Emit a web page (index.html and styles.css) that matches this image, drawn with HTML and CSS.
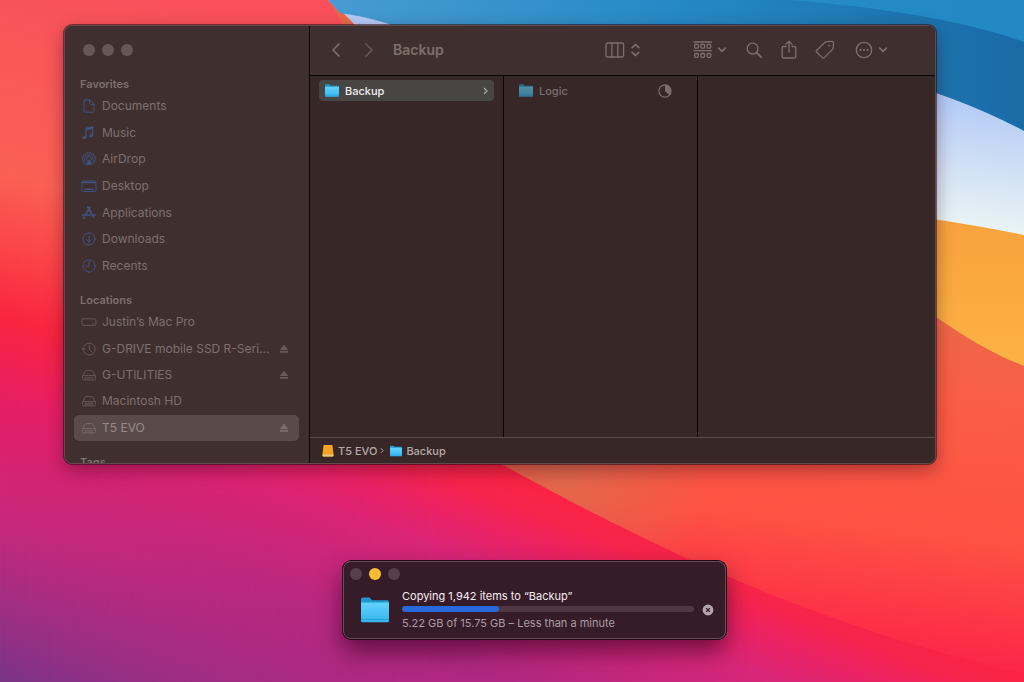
FILE: index.html
```html
<!DOCTYPE html>
<html lang="en">
<head>
<meta charset="utf-8">
<title>Backup</title>
<link rel="stylesheet" href="styles.css">
</head>
<body>
<svg class="defs" aria-hidden="true">
  <defs>
    <linearGradient id="folderFill" x1="0" y1="0" x2="0" y2="1"><stop offset="0" stop-color="#62d3fb"/><stop offset="1" stop-color="#35b4ee"/></linearGradient>
    <symbol id="folder" viewBox="0 0 28 26"><path d="M0 2.2Q0 .5 1.7.5H8.5L11 3.3H26.5Q28 3.3 28 5V10H0Z" fill="#1f98cd"/><path d="M0 5.5H28V23.8Q28 25.3 26.5 25.3H1.5Q0 25.3 0 23.8Z" fill="url(#folderFill)"/><path d="M0 22.4H28" stroke="#249fd6" stroke-width="1"/></symbol>
    <symbol id="eject" viewBox="0 0 10 10"><path d="M5 .8L9.2 5.9H.8ZM.8 7H9.2V8.8H.8Z" fill="currentColor"/></symbol>
    <symbol id="drive" viewBox="0 0 16 16"><path d="M1.5 9.3L4 4.4Q4.4 3.6 5.3 3.6H10.7Q11.6 3.6 12 4.4L14.5 9.3V11.5Q14.5 12.9 13.1 12.9H2.9Q1.5 12.9 1.5 11.5ZM1.6 9.2Q2 8.6 2.9 8.6H13.1Q14 8.6 14.4 9.2M4 10.9H12"/></symbol>
    <symbol id="chev" viewBox="0 0 8 6"><path d="M.8 1.2L4 4.5L7.2 1.2"/></symbol>
  </defs>
</svg>
<svg class="wallpaper" viewBox="0 0 1024 682" preserveAspectRatio="none" aria-hidden="true">
  <defs>
    <linearGradient id="base" gradientUnits="userSpaceOnUse" x1="180" y1="0" x2="10" y2="682"><stop offset="0" stop-color="#f9505c"/><stop offset=".3" stop-color="#fa6054"/><stop offset=".4" stop-color="#fb4548"/><stop offset=".5" stop-color="#f92440"/><stop offset=".62" stop-color="#e61e66"/><stop offset=".78" stop-color="#c9287c"/><stop offset="1" stop-color="#7b3488"/></linearGradient>
    <linearGradient id="lower" gradientUnits="userSpaceOnUse" x1="510" y1="472" x2="439" y2="654"><stop offset="0" stop-color="#fb2342"/><stop offset=".15" stop-color="#f6244c"/><stop offset=".32" stop-color="#ea2264"/><stop offset=".52" stop-color="#d8267a"/><stop offset="1" stop-color="#b02882"/></linearGradient>
    <linearGradient id="fade" x1="0" x2="1"><stop offset="0" stop-color="#fff" stop-opacity="0"/><stop offset=".45" stop-color="#fff"/></linearGradient>
    <mask id="lowerMask"><rect y="400" width="1024" height="282" fill="url(#fade)"/></mask>
    <linearGradient id="coral" gradientUnits="userSpaceOnUse" x1="955" y1="300" x2="915" y2="662"><stop offset="0" stop-color="#ea6848"/><stop offset=".3" stop-color="#fb5c45"/><stop offset=".65" stop-color="#fe5143"/><stop offset="1" stop-color="#fc2549"/></linearGradient>
    <radialGradient id="warm" gradientUnits="userSpaceOnUse" cx="560" cy="470" r="150"><stop offset="0" stop-color="#e0694c"/><stop offset="1" stop-color="#e0694c" stop-opacity="0"/></radialGradient>
    <linearGradient id="blue" x1="0" x2="1"><stop offset="0" stop-color="#489bd2"/><stop offset=".5" stop-color="#2589c5"/><stop offset="1" stop-color="#196ba6"/></linearGradient>
    <linearGradient id="white" gradientUnits="userSpaceOnUse" x1="960" y1="100" x2="945" y2="230"><stop offset="0" stop-color="#b4cbf7"/><stop offset=".4" stop-color="#cbdcf5"/><stop offset="1" stop-color="#ecf6f5"/></linearGradient>
    <linearGradient id="amber" x1="0" y1="0" x2="0" y2="1"><stop offset="0" stop-color="#f79e3c"/><stop offset="1" stop-color="#fdb244"/></linearGradient>
  </defs>
  <rect width="1024" height="682" fill="url(#base)"/>
  <path d="M328 0C380 60 400 400 500 464V682H1024V0Z" fill="url(#coral)"/>
  <rect x="500" y="400" width="300" height="260" fill="url(#warm)"/>
  <g mask="url(#lowerMask)"><path d="M0 400H430C480 440 485 455 505 466C570 502 630 532 690 560C780 600 880 640 1024 674V682H0Z" fill="url(#lower)"/></g>
  <path d="M880 282C945 320 970 345 1024 366V215L880 190Z" fill="url(#amber)"/>
  <path d="M328 0C350 18 357 25 380 60L880 212Q950 220 1024 235V0Z" fill="url(#white)"/>
  <path d="M328 0L340 13Q375 18 400 28L880 76Q960 97 1024 131V0Z" fill="url(#blue)"/>
  <path d="M790 0Q940 12 1024 42V0Z" fill="#2792cd" opacity=".75"/>
</svg>

<main class="desktop">
<section class="window finder" aria-label="Finder">
  <aside class="sidebar">
    <div class="lights"><button aria-label="Close"></button><button aria-label="Minimize"></button><button aria-label="Zoom"></button></div>
    <h2>Favorites</h2>
    <ul class="places favorites">
      <li><a href="#"><svg viewBox="0 0 16 16"><path d="M4 1.8H8.5L13 6.4V12.8Q13 14.2 11.6 14.2H4.4Q3 14.2 3 12.8V3.2Q3 1.8 4.4 1.8M8.5 1.8V5.2Q8.5 6.4 9.7 6.4H13"/></svg><span>Documents</span></a></li>
      <li><a href="#"><svg viewBox="0 0 16 16"><path d="M5 12.2V3.4L11.6 2V10.4M5 4.8L11.6 3.4" stroke-width="1.3"/><ellipse cx="3.5" cy="12.4" rx="1.9" ry="1.5" class="solid thin"/><ellipse cx="10.1" cy="10.8" rx="1.9" ry="1.5" class="solid thin"/></svg><span>Music</span></a></li>
      <li><a href="#"><svg viewBox="0 0 16 16"><path d="M4 13.3A6.5 6.5 0 1 1 12 13.3M5 11.5A4.4 4.4 0 1 1 11 11.5M6.4 9.9A2.4 2.4 0 1 1 9.6 9.9" /><path d="M8 8L5 14H11Z" class="solid thin"/></svg><span>AirDrop</span></a></li>
      <li><a href="#"><svg viewBox="0 0 16 16"><rect x="1" y="3" width="14" height="10.5" rx="1.2"/><path d="M1.5 4.6H14.5M4 11.3H12" stroke-width="1.5"/></svg><span>Desktop</span></a></li>
      <li><a href="#"><svg viewBox="0 0 16 16"><path d="M6.8 2L12.7 12.6M9 2L4.7 9.8M1.5 10H9.2M11.5 10H14.2M3.5 12L2.7 13.5" stroke-width="1.6"/></svg><span>Applications</span></a></li>
      <li><a href="#"><svg viewBox="0 0 16 16"><circle cx="8" cy="8" r="6.1"/><path d="M8 4.8V11M5.6 8.7L8 11.1L10.4 8.7"/></svg><span>Downloads</span></a></li>
      <li><a href="#"><svg viewBox="0 0 16 16"><circle cx="8" cy="8" r="6.1"/><path d="M8 4V8.3H5"/></svg><span>Recents</span></a></li>
    </ul>
    <h2>Locations</h2>
    <ul class="places locations">
      <li><a href="#"><svg viewBox="0 0 16 16"><rect x="1" y="4.8" width="14" height="6.6" rx="1.3"/><path d="M12 9.6H13"/></svg><span>Justin’s Mac Pro</span></a></li>
      <li><a href="#"><svg viewBox="0 0 16 16"><path d="M2.5 6.1A6 6 0 1 1 2.7 10.5M8.3 4.2V8.2L10.5 10.7"/><path d="M.3 7.2H4.3L2.3 9.7Z" class="solid thin"/></svg><span>G-DRIVE mobile SSD R-Seri...</span></a><button class="eject" aria-label="Eject G-DRIVE"><svg><use href="#eject"/></svg></button></li>
      <li><a href="#"><svg><use href="#drive"/></svg><span>G-UTILITIES</span></a><button class="eject" aria-label="Eject G-UTILITIES"><svg><use href="#eject"/></svg></button></li>
      <li><a href="#"><svg viewBox="0 0 16 16"><use href="#drive" width="16" height="16"/><path d="M5 9V12.5M8 9V12.5M11 9V12.5"/></svg><span>Macintosh HD</span></a></li>
      <li class="selected"><a href="#"><svg><use href="#drive"/></svg><span>T5 EVO</span></a><button class="eject" aria-label="Eject T5 EVO"><svg><use href="#eject"/></svg></button></li>
    </ul>
    <h2>Tags</h2>
  </aside>
  <div class="content">
    <header class="toolbar">
      <button class="back" aria-label="Back"><svg width="10" height="16" viewBox="0 0 10 16"><path d="M8 2L2 8L8 14"/></svg></button>
      <button class="forward" aria-label="Forward"><svg width="10" height="16" viewBox="0 0 10 16"><path d="M2 2L8 8L2 14"/></svg></button>
      <h1>Backup</h1>
      <button class="view" aria-label="Column view"><svg width="20" height="16" viewBox="0 0 20 16"><rect x="1" y="1" width="17.6" height="14" rx="1.6"/><path d="M6.9 1V15M12.8 1V15"/></svg><svg width="9" height="14" viewBox="0 0 9 14" class="bold"><path d="M1.2 4.7L4.5 1.5L7.8 4.7M1.2 9.3L4.5 12.5L7.8 9.3"/></svg></button>
      <button class="group" aria-label="Group"><svg width="20" height="18" viewBox="0 0 20 18"><path d="M1 1H18.5M1 9.7H18.5"/><rect x="1.7" y="3.4" width="3.6" height="3.8" rx=".7"/><rect x="7.9" y="3.4" width="3.6" height="3.8" rx=".7"/><rect x="14.1" y="3.4" width="3.6" height="3.8" rx=".7"/><rect x="1.7" y="12.5" width="3.6" height="3.8" rx=".7"/><rect x="7.9" y="12.5" width="3.6" height="3.8" rx=".7"/><rect x="14.1" y="12.5" width="3.6" height="3.8" rx=".7"/></svg><svg width="8" height="6" class="bold"><use href="#chev"/></svg></button>
      <button aria-label="Search"><svg width="16" height="16" viewBox="0 0 16 16"><circle cx="6.6" cy="6.6" r="5.4"/><path d="M10.6 10.6L15 15" stroke-width="1.8"/></svg></button>
      <button class="share" aria-label="Share"><svg width="16" height="20" viewBox="0 0 16 20"><path d="M5 6.5H2.6Q1.2 6.5 1.2 8V16.5Q1.2 18 2.6 18H13.4Q14.8 18 14.8 16.5V8Q14.8 6.5 13.4 6.5H11M8 12V1.5M4.9 4.4L8 1.3L11.1 4.4"/></svg></button>
      <button class="tag" aria-label="Tags"><svg width="20" height="20" viewBox="0 0 20 20"><path d="M11.5 1.7L16.4 1.3Q18.5 1.2 18.5 3.3L18.2 8Q18.1 8.8 17.5 9.4L9.4 17.6Q8.3 18.7 7.2 17.6L1.8 12.2Q.8 11.2 1.8 10.2L10 2.3Q10.7 1.7 11.5 1.7Z"/><circle cx="14.1" cy="5.7" r=".9" class="dot"/></svg></button>
      <button class="more" aria-label="More"><svg width="18" height="18" viewBox="0 0 18 18"><circle cx="9" cy="9" r="7.7"/><g class="dot"><circle cx="5.5" cy="9" r="1.1"/><circle cx="9" cy="9" r="1.1"/><circle cx="12.5" cy="9" r="1.1"/></g></svg><svg width="8" height="6" class="bold"><use href="#chev"/></svg></button>
    </header>
    <div class="columns">
      <div class="column"><a href="#" class="file open"><svg class="folder"><use href="#folder"/></svg><span>Backup</span><svg class="arrow" viewBox="0 0 5 8"><path d="M1 1L4 4L1 7"/></svg></a></div>
      <div class="column"><a href="#" class="file pending"><svg class="folder"><use href="#folder"/></svg><span>Logic</span><svg class="pie" viewBox="0 0 14 14"><circle cx="7" cy="7" r="6.1"/><path d="M7 1.2A5.8 5.8 0 0 1 11.1 11.1L7 7Z" class="slice"/></svg></a></div>
      <div class="column"></div>
    </div>
    <nav class="path" aria-label="Path">
      <a href="#"><svg width="12" height="13" viewBox="0 0 12 13"><path d="M1.6 1H10.4L11.5 10V11.6Q11.5 12.5 10.5 12.5H1.5Q.5 12.5.5 11.6V10Z" fill="#f9a51c"/><path d="M.5 10.5H11.5V11.6Q11.5 12.5 10.5 12.5H1.5Q.5 12.5.5 11.6Z" fill="#e7c779"/></svg>T5 EVO</a>
      <svg class="arrow" viewBox="0 0 5 8"><path d="M1 1L4 4L1 7"/></svg>
      <a href="#"><svg class="small-folder"><use href="#folder"/></svg>Backup</a>
    </nav>
  </div>
</section>

<section class="window copy" aria-label="Copy">
  <div class="lights"><button aria-label="Close"></button><button class="minimize" aria-label="Minimize"></button><button aria-label="Zoom"></button></div>
  <div class="job">
    <svg class="big-folder"><use href="#folder"/></svg>
    <div class="info">
      <label for="progress">Copying 1,942 items to “Backup”</label>
      <progress id="progress" value="5.22" max="15.75"></progress>
      <p>5.22 GB of 15.75 GB – Less than a minute</p>
    </div>
    <button class="stop" aria-label="Stop copying"><svg viewBox="0 0 12 12"><circle cx="6" cy="6" r="5.4"/><path d="M4.1 4.1L7.9 7.9M7.9 4.1L4.1 7.9"/></svg></button>
  </div>
</section>
</main>
</body>
</html>
```
FILE: styles.css
```css
* { box-sizing: border-box; }
body {
  margin: 0;
  min-height: 100vh;
  overflow: hidden;
  background: #e61e66;
  font-family: Inter, "Liberation Sans", sans-serif;
}
h1, h2, p, ul { margin: 0; padding: 0; }
ul { list-style: none; }
a { color: inherit; text-decoration: none; }
button { display: flex; align-items: center; border: 0; padding: 0; background: none; color: inherit; }
svg { display: block; flex: none; }
.defs { position: absolute; width: 0; height: 0; }
.wallpaper { position: absolute; top: 0; left: 0; width: 100%; height: 100%; }
.desktop { position: relative; height: 100vh; }

.window { position: absolute; overflow: hidden; }
.lights { display: flex; gap: 7px; }
.lights button { width: 12px; height: 12px; border-radius: 50%; background: #675857; }

.finder {
  top: 25px;
  right: 88px;
  bottom: 218px;
  left: 64px;
  display: flex;
  border: 1px solid #624b4a;
  border-radius: 8px;
  background: #402f2f;
  box-shadow: 0 0 0 1px rgba(40, 10, 20, .55), 0 6px 18px rgba(40, 0, 20, .4);
}
.sidebar {
  flex: none;
  width: 245px;
  padding: 18px 10px 0 9px;
  border-right: 1px solid #080505;
  color: #7d706e;
  overflow: hidden;
}
.sidebar .lights { padding: 0 9px 20px; }
.sidebar h2 { padding-left: 6px; font-size: 11px; line-height: 17px; font-weight: 600; }
.places { display: grid; grid-auto-rows: 1fr; }
.favorites { height: 186px; margin-bottom: 12px; }
.locations { height: 132px; margin-bottom: 12px; }
.sidebar ul + h2 { line-height: 18px; }
.places li { display: flex; align-items: center; padding-right: 10px; border-radius: 5px; }
.places a { display: flex; flex: 1; align-items: center; gap: 5px; padding-left: 7px; min-width: 0; font-size: 12px; line-height: 16px; white-space: nowrap; }
.places a svg { width: 16px; height: 16px; fill: none; stroke: #655655; stroke-width: 1; stroke-linecap: round; stroke-linejoin: round; }
.favorites a svg { stroke: #3e5382; }
.places .solid { fill: #3e5382; }
.locations .solid { fill: #655655; }
.places a .thin { stroke: none; }
.selected { background: #5a4b4a; color: #968a89; }
.places .selected a svg { stroke: #776968; }
.eject { color: #695a58; }
.selected .eject { color: #7d6f6e; }
.eject svg { width: 10px; height: 10px; }

.content { flex: 1; display: flex; flex-direction: column; min-width: 0; background: #382727; }
.toolbar {
  display: flex;
  flex: none;
  align-items: center;
  height: 50px;
  padding: 0 48px 2px 21px;
  border-bottom: 1px solid #080505;
  background: #402f2f;
  color: #7d6f6d;
}
.toolbar svg { fill: none; stroke: currentColor; stroke-width: 1.3; stroke-linecap: round; stroke-linejoin: round; }
.toolbar .bold { stroke-width: 1.7; }
.toolbar .dot { fill: currentColor; stroke: none; }
.back svg { stroke-width: 1.7; }
.forward { margin-left: 23px; color: #655655; }
.forward svg { stroke-width: 1.7; }
.toolbar h1 { flex: 1; margin-left: 19px; font-size: 14px; line-height: 20px; font-weight: 600; }
.view { gap: 6px; margin-right: 53px; }
.group { gap: 5px; margin-right: 20px; }
.share { margin-left: 19px; }
.tag { margin: 0 20px 0 18px; }
.more { gap: 6px; }

.columns { display: grid; flex: 1; grid-template-columns: 194px 194px 1fr; min-height: 0; }
.column { padding: 4px 9px; border-right: 1px solid #080505; }
.column:last-child { border-right: 0; }
.file { display: flex; align-items: center; gap: 6px; height: 21px; padding: 0 6px; border-radius: 4px; font-size: 11px; line-height: 16px; font-weight: 500; }
.file span { flex: 1; }
.folder { width: 14px; height: 13px; }
.open { background: #484645; color: #f1eeee; }
.arrow { width: 5px; height: 8px; fill: none; stroke: #b0a7a6; stroke-width: 1.2; }
.pending { color: #7c6e6d; }
.pending .folder { opacity: .6; }
.pie { width: 14px; height: 14px; margin-right: 10px; fill: none; stroke: #7c6e6d; stroke-width: 1.2; }
.pie .slice { fill: #7c6e6d; stroke: none; }
.path { display: flex; flex: none; align-items: center; gap: 3px; height: 26px; padding: 0 12px; border-top: 1px solid #5b4c4b; color: #b4aaa9; font-size: 11px; line-height: 16px; font-weight: 500; }
.path a { display: flex; align-items: center; gap: 4px; }
.path .arrow { width: 4px; height: 7px; margin-right: 3px; }
.small-folder { width: 12px; height: 12px; }

.copy {
  bottom: 43px;
  left: calc(50% - 169px);
  width: 383px;
  padding: 6px 11px 7px 6px;
  border: 1px solid #6c4855;
  border-radius: 8px;
  background: #361b29;
  box-shadow: 0 0 0 1px #210815, 0 12px 24px rgba(50, 0, 30, .65);
}
.copy .lights { padding-bottom: 9px; }
.copy .lights button { background: #564049; }
.copy .lights .minimize { background: #fdbd2e; }
.job { display: flex; align-items: center; gap: 8px; padding-left: 11px; }
.big-folder { width: 28px; height: 26px; }
.info { display: flex; flex: 1; flex-direction: column; padding-left: 5px; font-size: 11px; line-height: 15px; }
.info label { color: #f3edf0; }
.info p { margin-top: 4px; color: #ab9da3; }
progress { display: block; width: 100%; height: 6px; margin-top: 2px; appearance: none; border: 0; border-radius: 3px; background: #513743; overflow: hidden; }
progress::-webkit-progress-bar { background: #513743; border-radius: 3px; }
progress::-webkit-progress-value { background: #2868db; border-radius: 3px; }
.stop svg { width: 12px; height: 12px; fill: #b4a6ac; stroke: #361b29; stroke-width: 1.3; }
.stop circle { stroke: none; }
```
